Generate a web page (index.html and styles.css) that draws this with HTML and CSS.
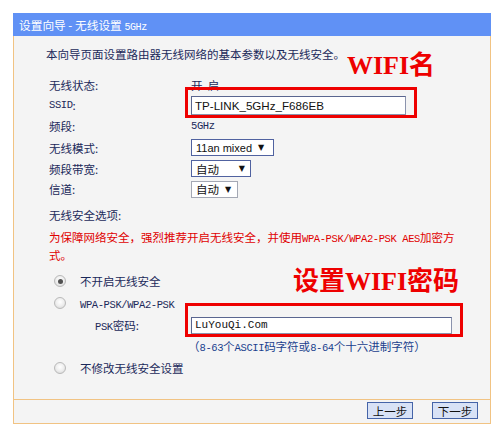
FILE: index.html
```html
<!DOCTYPE html>
<html lang="zh-CN">
<head>
<meta charset="utf-8">
<title>设置向导 - 无线设置 5GHz</title>
<link rel="stylesheet" href="styles.css">
</head>
<body>
<div class="panel">
  <div class="title">设置向导 - 无线设置 <span class="en">5GHz</span></div>
  <div class="body">
    <p class="intro">本向导页面设置路由器无线网络的基本参数以及无线安全。</p>
    <div class="form">
      <span class="label">无线状态:</span><span class="value">开&nbsp;&nbsp;启</span>
      <span class="label"><span class="en">SSID</span>:</span><span class="value"><span class="textbox ssid">TP-LINK_5GHz_F686EB</span></span>
      <span class="label">频段:</span><span class="value"><span class="en">5GHz</span></span>
      <span class="label">无线模式:</span><span class="value"><span class="select sel-mode">11an mixed <span class="arrow">▼</span></span></span>
      <span class="label">频段带宽:</span><span class="value"><span class="select sel-bw">自动 <span class="arrow">▼</span></span></span>
      <span class="label">信道:</span><span class="value"><span class="select sel-ch">自动 <span class="arrow">▼</span></span></span>
    </div>
    <p class="sec-title">无线安全选项:</p>
    <p class="warn">为保障网络安全，强烈推荐开启无线安全，并使用<span class="en">WPA-PSK/WPA2-PSK AES</span>加密方<br>式。</p>
    <div class="options">
      <div class="opt"><span class="radio checked"></span><span>不开启无线安全</span></div>
      <div class="opt"><span class="radio"></span><span class="en">WPA-PSK/WPA2-PSK</span></div>
      <div class="psk"><span class="psk-label"><span class="en">PSK</span>密码:</span><span class="textbox pw">LuYouQi.Com</span></div>
      <div class="hint">（<span class="en">8-63</span>个<span class="en">ASCII</span>码字符或<span class="en">8-64</span>个十六进制字符）</div>
      <div class="opt last"><span class="radio"></span><span>不修改无线安全设置</span></div>
    </div>
  </div>
  <div class="footer">
    <span class="btn">上一步</span>
    <span class="btn">下一步</span>
  </div>
  <div class="mark mark-ssid"></div>
  <div class="mark mark-pw"></div>
  <div class="note note-ssid">WIFI名</div>
  <div class="note note-pw">设置WIFI密码</div>
</div>
</body>
</html>
```
FILE: styles.css
```css
* { box-sizing: border-box; }
html, body { margin: 0; padding: 0; background: #ffffff; }
body {
  font-family: "Noto Sans CJK SC", "Liberation Sans", sans-serif;
  font-size: 11.5px;
  color: #1b295a;
}
p { margin: 0; }
.en { font-family: "Liberation Mono", monospace; font-size: 10.5px; letter-spacing: -0.4px; }

.panel {
  position: relative;
  margin: 13px 0 0 13px;
  width: 478px;
}
.title {
  height: 23px;
  line-height: 23px;
  padding-left: 6px;
  background: #6091f5;
  color: #ffffff;
  font-size: 11.7px;
}
.title .en { font-size: 10px; }

.body {
  height: 363px;
  background: #f4f4f4;
  border-left: 1px solid #f1c383;
  border-right: 1px solid #f1c383;
  padding-top: 8px;
}
.intro { line-height: 20px; padding-left: 32px; }

.form {
  margin-top: 11px;
  padding-left: 35px;
  display: grid;
  grid-template-columns: 142px 1fr;
  grid-template-rows: 20px 20px 22px 21px 21px 20px;
  align-items: center;
}
.label, .value { display: flex; align-items: center; height: 100%; }

.textbox {
  display: inline-flex;
  align-items: center;
  background: #ffffff;
  border: 1px solid #8b93ad;
  border-top-color: #5a6690;
  border-left-color: #5a6690;
}
.ssid {
  width: 215px;
  height: 19px;
  padding-left: 3px;
  font-family: "Liberation Sans", Arial, sans-serif;
  font-size: 11.6px;
  color: #111111;
}
.select {
  display: inline-flex;
  align-items: center;
  height: 17px;
  background: #ffffff;
  border: 1px solid #5062a0;
  padding-left: 4px;
  color: #111111;
  font-size: 11.5px;
}
.sel-mode { width: 83px; font-family: "Liberation Sans", Arial, sans-serif; font-size: 11px; }
.sel-bw { width: 60px; }
.sel-ch { width: 47px; border-color: #a4a8b4; }
.arrow { margin-left: auto; padding-right: 5px; font-size: 8px; font-family: "DejaVu Sans", sans-serif; }
.sel-mode .arrow { margin-left: 6px; }
.sel-ch .arrow { margin-left: 6px; }

.sec-title { margin-top: 6px; line-height: 20px; padding-left: 35px; }
.warn { margin-top: 4px; line-height: 16px; padding-left: 35px; color: #e00000; }

.options { margin-top: 7px; padding-left: 40px; }
.opt { display: flex; align-items: center; height: 22px; gap: 14px; }
.opt.last { margin-top: 1px; }
.radio {
  width: 12px;
  height: 12px;
  border-radius: 50%;
  border: 1px solid #b9b9b9;
  background: radial-gradient(circle at 50% 40%, #ffffff 0%, #eeeeee 50%, #d2d2d2 100%);
  display: inline-flex;
  align-items: center;
  justify-content: center;
}
.radio.checked::after {
  content: "";
  width: 5px;
  height: 5px;
  border-radius: 50%;
  background: #505050;
}
.opt .en { padding-top: 3px; }

.psk { display: flex; align-items: center; height: 22px; padding-left: 41px; }
.psk-label { width: 96px; }
.pw {
  width: 261px;
  height: 17px;
  padding-left: 3px;
  font-family: "Liberation Mono", monospace;
  font-size: 11px;
  color: #111111;
}
.hint { height: 20px; line-height: 20px; padding-left: 134px; color: #1a3f8e; }

.footer {
  height: 25px;
  border: 1px solid #f1c383;
  background: #f4f4f4;
  display: flex;
  justify-content: flex-end;
  align-items: flex-start;
  gap: 19px;
  padding: 2px 12px 0 0;
}
.btn {
  width: 46px;
  height: 17px;
  display: inline-flex;
  align-items: center;
  justify-content: center;
  background: #d8e2f6;
  border: 1px solid #4564a8;
  color: #111111;
  font-size: 11.5px;
}

.mark {
  position: absolute;
  border: 3px solid #ee0000;
}
.mark-ssid { left: 172px; top: 74px; width: 232px; height: 31px; }
.mark-pw { left: 172px; top: 290px; width: 278px; height: 34px; }
.note {
  position: absolute;
  color: #ee0000;
  font-family: "Liberation Serif", "Noto Sans CJK SC", serif;
  font-weight: 700;
  font-size: 26px;
  line-height: 26px;
  white-space: nowrap;
}
.note-ssid { left: 334px; top: 40px; }
.note-pw { left: 280px; top: 256px; }
```
